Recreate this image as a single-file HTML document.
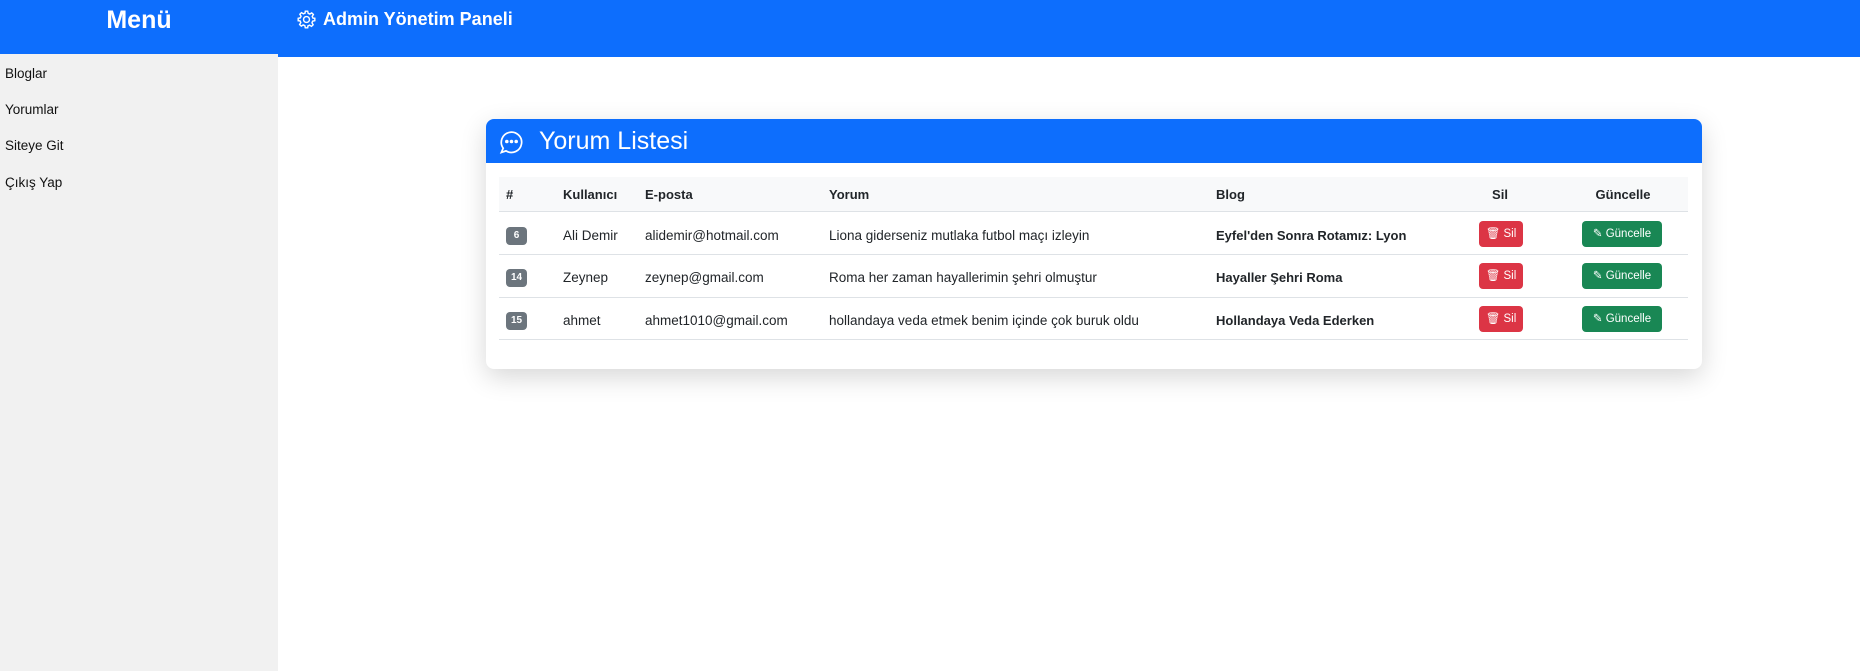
<!DOCTYPE html>
<html><head><meta charset="utf-8"><style>
*{margin:0;padding:0;box-sizing:border-box}
body{width:1860px;height:671px;position:relative;background:#fff;font-family:"Liberation Sans",sans-serif;color:#212529;overflow:hidden}
.side{position:absolute;left:0;top:0;width:278px;height:671px;background:#f1f1f1}
.sidehead{position:absolute;left:0;top:0;width:278px;height:54px;background:#0d6efd;color:#fff;font-size:25px;font-weight:bold;text-align:center;line-height:40px}
.side a{position:absolute;left:5px;font-size:13.5px;color:#111;text-decoration:none}
.top{position:absolute;left:278px;top:0;right:0;height:57px;background:#0d6efd;color:#fff;font-size:18px;font-weight:bold}
.card{position:absolute;left:486px;top:119px;width:1216px;height:250px;background:#fff;border-radius:8px;box-shadow:0 8px 26px rgba(0,0,0,.16);overflow:hidden}
.ch{height:44px;background:#0d6efd;color:#fff;font-size:25px;line-height:44px;padding-left:53px;position:relative}
.t{position:absolute;font-size:13.5px;white-space:nowrap}
.b{font-weight:bold;font-size:13px}
.hd{position:absolute;left:13px;top:58px;width:1189px;height:35px;background:#f8f9fa;border-bottom:1px solid #dee2e6}
.ln{position:absolute;left:13px;width:1189px;height:1px;background:#dee2e6}
.badge{position:absolute;left:20px;width:21px;height:18px;background:#6c757d;color:#fff;font-size:10px;font-weight:bold;text-align:center;line-height:18px;border-radius:4px}
.sil{position:absolute;left:993px;width:44px;height:26px;background:#dc3545;color:#fff;font-size:11.5px;border-radius:4px;text-align:center;line-height:26px}
.gun{position:absolute;left:1096px;width:80px;height:26px;background:#198754;color:#fff;font-size:11.5px;border-radius:4px;text-align:center;line-height:26px}
</style></head><body>
<div class="side"><div class="sidehead">Menü</div>
<a style="top:66px">Bloglar</a><a style="top:102px">Yorumlar</a><a style="top:138px">Siteye Git</a><a style="top:175px">Çıkış Yap</a></div>
<div class="top"><svg style="position:absolute;left:19px;top:10px" width="19" height="19" viewBox="0 0 16 16" fill="none" stroke="#fff" stroke-width="1.2"><circle cx="8" cy="8" r="2.5"/><path d="M7 1h2l.4 1.8 1.4.6 1.6-1 1.4 1.4-1 1.6.6 1.4L15 7v2l-1.8.4-.6 1.4 1 1.6-1.4 1.4-1.6-1-1.4.6L9 15H7l-.4-1.8-1.4-.6-1.6 1-1.4-1.4 1-1.6-.6-1.4L1 9V7l1.8-.4.6-1.4-1-1.6 1.4-1.4 1.6 1 1.4-.6z"/></svg><span style="position:absolute;left:45px;top:9px">Admin Yönetim Paneli</span></div>
<div class="card">
<div class="ch"><svg style="position:absolute;left:13px;top:10px" width="25" height="25" viewBox="0 0 16 16" fill="none" stroke="#fff" stroke-width="1.1"><path d="M2.7 12.3A6.5 6.5 0 1 1 4.5 14L1.5 15z"/><circle cx="5" cy="8" r=".6" fill="#fff"/><circle cx="8" cy="8" r=".6" fill="#fff"/><circle cx="11" cy="8" r=".6" fill="#fff"/></svg>Yorum Listesi</div>
<div class="hd"></div>
<div class="t b" style="left:20px;top:68px">#</div>
<div class="t b" style="left:77px;top:68px">Kullanıcı</div>
<div class="t b" style="left:159px;top:68px">E-posta</div>
<div class="t b" style="left:343px;top:68px">Yorum</div>
<div class="t b" style="left:730px;top:68px">Blog</div>
<div class="t b" style="left:984px;top:68px;width:60px;text-align:center">Sil</div>
<div class="t b" style="left:1087px;top:68px;width:100px;text-align:center">Güncelle</div>

<div class="badge" style="top:108px">6</div>
<div class="t" style="left:77px;top:109px">Ali Demir</div>
<div class="t" style="left:159px;top:109px">alidemir@hotmail.com</div>
<div class="t" style="left:343px;top:109px">Liona giderseniz mutlaka futbol maçı izleyin</div>
<div class="t b" style="left:730px;top:109px">Eyfel'den Sonra Rotamız: Lyon</div>
<div class="sil" style="top:102px">🗑 Sil</div><div class="gun" style="top:102px">✎ Güncelle</div>
<div class="ln" style="top:135px"></div>

<div class="badge" style="top:150px">14</div>
<div class="t" style="left:77px;top:151px">Zeynep</div>
<div class="t" style="left:159px;top:151px">zeynep@gmail.com</div>
<div class="t" style="left:343px;top:151px">Roma her zaman hayallerimin şehri olmuştur</div>
<div class="t b" style="left:730px;top:151px">Hayaller Şehri Roma</div>
<div class="sil" style="top:144px">🗑 Sil</div><div class="gun" style="top:144px">✎ Güncelle</div>
<div class="ln" style="top:178px"></div>

<div class="badge" style="top:193px">15</div>
<div class="t" style="left:77px;top:194px">ahmet</div>
<div class="t" style="left:159px;top:194px">ahmet1010@gmail.com</div>
<div class="t" style="left:343px;top:194px">hollandaya veda etmek benim içinde çok buruk oldu</div>
<div class="t b" style="left:730px;top:194px">Hollandaya Veda Ederken</div>
<div class="sil" style="top:187px">🗑 Sil</div><div class="gun" style="top:187px">✎ Güncelle</div>
<div class="ln" style="top:220px"></div>
</div>
</body></html>
